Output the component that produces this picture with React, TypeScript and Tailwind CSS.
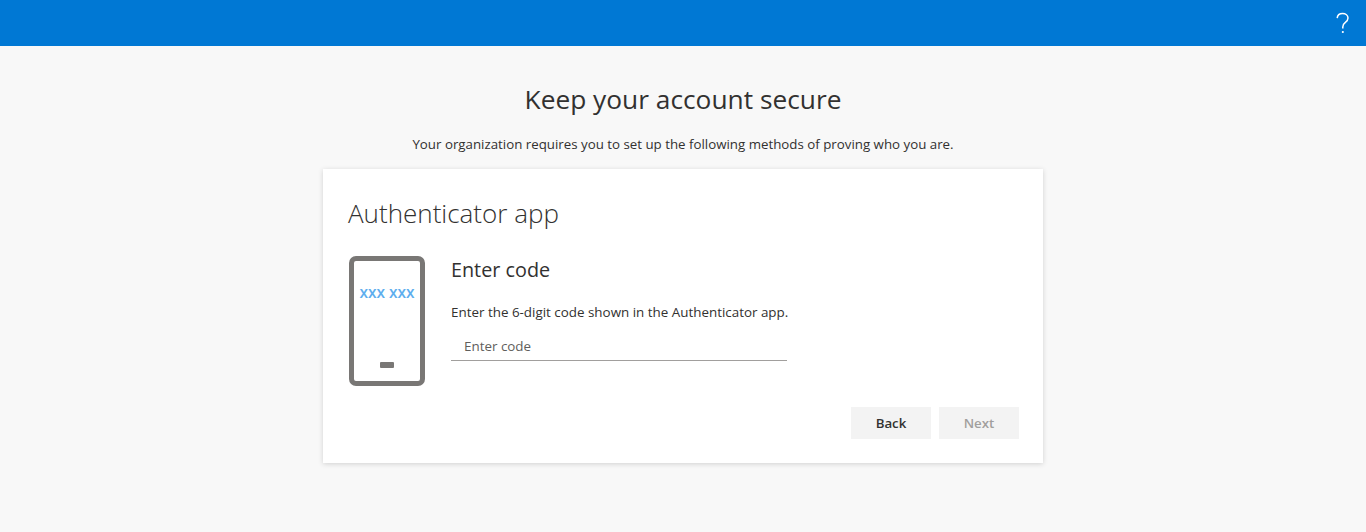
export default function App() {
  const font = { fontFamily: '"Open Sans", "Noto Sans", sans-serif' };
  return (
    <div style={font} className="min-h-[532px] bg-[#f8f8f8] text-[#323130] flex flex-col">
      <header className="h-[46px] bg-[#0078d4] flex items-center justify-end pr-[16px] shrink-0">
        <svg width="14" height="23" viewBox="0 0 14 22" fill="none" stroke="#fff" strokeWidth="1.5" aria-label="Help">
          <path d="M1.2 5.6C1.4 3 3.6 1 6.6 1c3 0 5.4 1.9 5.4 4.6 0 2-1 3.1-2.6 4.3C7.6 11.2 6.8 12.2 6.8 14.4V16" />
          <path d="M6.8 18.6v1.8" strokeWidth="1.8" />
        </svg>
      </header>
      <main className="flex flex-col items-center">
        <h1 className="mt-[33px] text-[26.3px] leading-[40px] font-normal">Keep your account secure</h1>
        <p className="mt-[15px] text-[13.3px] leading-[20px]">Your organization requires you to set up the following methods of proving who you are.</p>
        <section className="mt-[15px] w-[720px] h-[294px] bg-white shadow-[0_1px_5px_rgba(0,0,0,0.16)] px-[24px] pt-[24px] flex flex-col">
          <h2 className="ml-[1px] text-[26px] leading-[40px] font-light">Authenticator app</h2>
          <div className="mt-[23px] flex">
            <div className="w-[76px] h-[130px] ml-[2px] rounded-[7px] border-[5px] border-[#797775] flex flex-col items-center relative shrink-0">
              <span className="mt-[21px] text-[15.5px] leading-[20px] whitespace-nowrap text-[#5eaeee] font-semibold">xxx xxx</span>
              <span className="absolute bottom-[13px] w-[14px] h-[6px] rounded-[1px] bg-[#797775]"></span>
            </div>
            <div className="ml-[26px] w-[336px]">
              <h3 className="text-[19.8px] leading-[28px] font-normal">Enter code</h3>
              <p className="mt-[18px] text-[13.4px] leading-[20px] whitespace-nowrap">Enter the 6-digit code shown in the Authenticator app.</p>
              <input placeholder="Enter code" className="mt-[10px] block w-full h-[29px] border-b border-[#a19f9d] pl-[13px] text-[13.4px] outline-none placeholder:text-[#605e5c]" />
            </div>
          </div>
          <div className="mt-[21px] flex justify-end gap-[8px]">
            <button className="w-[80px] h-[32px] pt-[1px] bg-[#f3f3f3] text-[13.3px] font-semibold text-[#323130]">Back</button>
            <button disabled className="w-[80px] h-[32px] pt-[1px] bg-[#f3f3f3] text-[13.3px] font-semibold text-[#a19f9d]">Next</button>
          </div>
        </section>
      </main>
    </div>
  );
}
